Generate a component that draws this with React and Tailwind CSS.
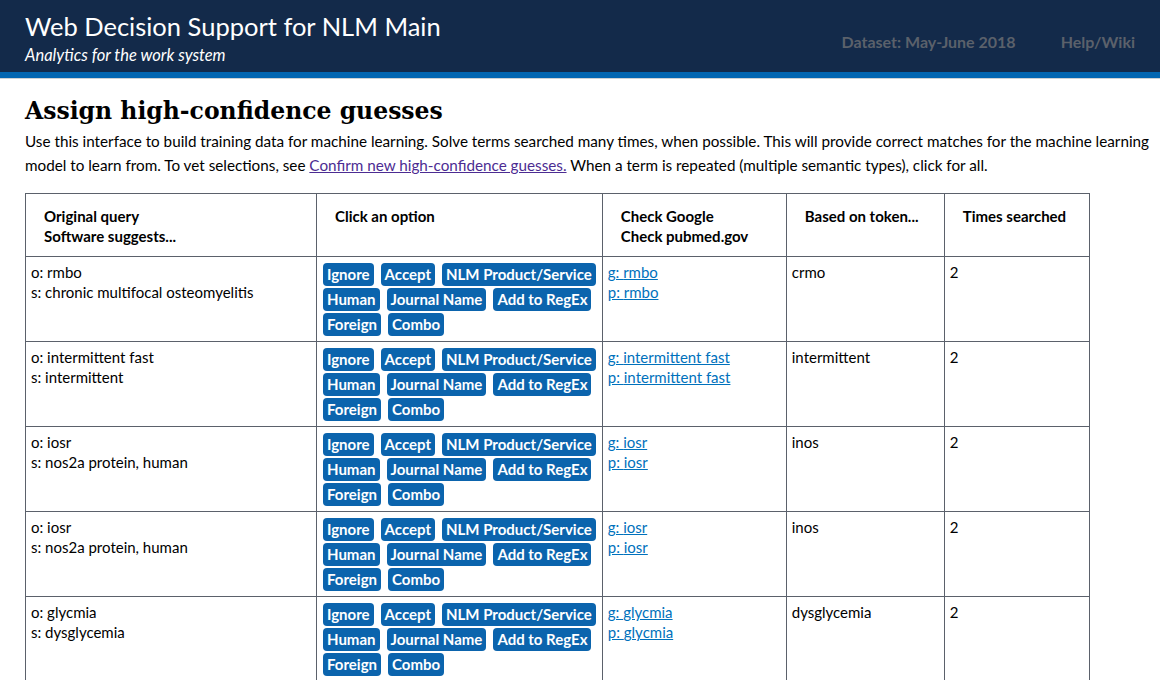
const rows = [
  { o: 'rmbo', s: 'chronic multifocal osteomyelitis', token: 'crmo', times: 2 },
  { o: 'intermittent fast', s: 'intermittent', token: 'intermittent', times: 2 },
  { o: 'iosr', s: 'nos2a protein, human', token: 'inos', times: 2 },
  { o: 'iosr', s: 'nos2a protein, human', token: 'inos', times: 2 },
  { o: 'glycmia', s: 'dysglycemia', token: 'dysglycemia', times: 2 },
];

const buttonRows = [
  ['Ignore', 'Accept', 'NLM Product/Service'],
  ['Human', 'Journal Name', 'Add to RegEx'],
  ['Foreign', 'Combo'],
];

function OptionButtons() {
  return (
    <div className="flex flex-col gap-[2px]">
      {buttonRows.map((row, i) => (
        <div key={i} className="flex gap-[7px]">
          {row.map((label) => (
            <span
              key={label}
              className="h-[23px] rounded-[4px] bg-[#0b64ad] px-[4px] text-[15px] font-bold leading-[23px] text-white whitespace-nowrap"
            >
              {label}
            </span>
          ))}
        </div>
      ))}
    </div>
  );
}

export default function App() {
  return (
    <div className="min-h-[680px] bg-white font-['Lato','Liberation_Sans',sans-serif] text-[#212121]">
      {/* Top banner */}
      <header className="bg-[#132a4a]">
        <div className="flex h-[72px] items-start justify-between px-[25px]">
          <div className="pt-[10px]">
            <div className="text-[25.5px] leading-[32px] text-white">Web Decision Support for NLM Main</div>
            <div className="mt-[2px] text-[16.5px] italic leading-[22px] text-white">Analytics for the work system</div>
          </div>
          <nav className="flex gap-[45px] pt-[30px] text-[16px] font-bold text-[#5b616b]">
            <span>Dataset: May-June 2018</span>
            <span>Help/Wiki</span>
          </nav>
        </div>
        <div className="h-[6px] bg-[#0366b1]" />
        <div className="h-[1px] bg-[#cfd1d3]" />
      </header>

      <main className="pl-[25px] pr-[6px]">
        <h1 className="mt-[15px] font-['DejaVu_Serif',serif] text-[23.5px] font-bold leading-[34px] text-black">
          Assign high-confidence guesses
        </h1>
        <p className="mt-[1px] text-[15.25px] leading-[24px] text-black">
          Use this interface to build training data for machine learning. Solve terms searched many times, when possible. This will provide correct matches for the machine learning model to learn from. To vet selections, see{' '}
          <a href="#" className="text-[#4c2c92] underline">Confirm new high-confidence guesses.</a> When a term is repeated (multiple semantic types), click for all.
        </p>

        <table className="mt-[16px] table-fixed border-collapse text-[15px] leading-[20px] text-black">
          <colgroup>
            <col className="w-[291px]" />
            <col className="w-[285px]" />
            <col className="w-[184px]" />
            <col className="w-[158px]" />
            <col className="w-[145px]" />
          </colgroup>
          <thead>
            <tr>
              <th className="border border-[#5b616b] px-[18px] pt-[12px] pb-[10px] text-left align-top font-bold">
                Original query<br />Software suggests...
              </th>
              <th className="border border-[#5b616b] px-[18px] pt-[12px] pb-[10px] text-left align-top font-bold">
                Click an option
              </th>
              <th className="border border-[#5b616b] px-[18px] pt-[12px] pb-[10px] text-left align-top font-bold">
                Check Google<br />Check pubmed.gov
              </th>
              <th className="border border-[#5b616b] px-[18px] pt-[12px] pb-[10px] text-left align-top font-bold">
                Based on token...
              </th>
              <th className="border border-[#5b616b] px-[18px] pt-[12px] pb-[10px] text-left align-top font-bold">
                Times searched
              </th>
            </tr>
          </thead>
          <tbody>
            {rows.map((r, i) => (
              <tr key={i}>
                <td className="border border-[#5b616b] px-[5px] pt-[5px] align-top">
                  o: {r.o}<br />s: {r.s}
                </td>
                <td className="border border-[#5b616b] px-[6px] pt-[6px] pb-[5px] align-top">
                  <OptionButtons />
                </td>
                <td className="border border-[#5b616b] px-[5px] pt-[5px] align-top">
                  <a href="#" className="text-[#0071bc] underline">g: {r.o}</a><br />
                  <a href="#" className="text-[#0071bc] underline">p: {r.o}</a>
                </td>
                <td className="border border-[#5b616b] px-[5px] pt-[5px] align-top">{r.token}</td>
                <td className="border border-[#5b616b] px-[5px] pt-[5px] align-top">{r.times}</td>
              </tr>
            ))}
          </tbody>
        </table>
      </main>
    </div>
  );
}
